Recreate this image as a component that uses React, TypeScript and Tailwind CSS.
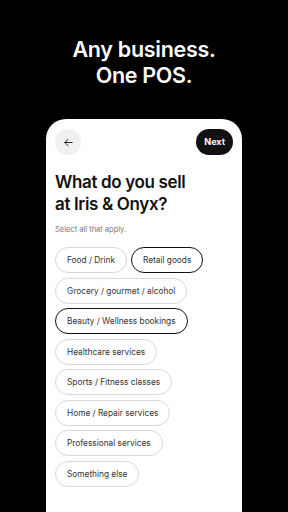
import React from 'react';

const options: { label: string; selected?: boolean }[] = [
  { label: 'Food / Drink' },
  { label: 'Retail goods', selected: true },
  { label: 'Grocery / gourmet / alcohol' },
  { label: 'Beauty / Wellness bookings', selected: true },
  { label: 'Healthcare services' },
  { label: 'Sports / Fitness classes' },
  { label: 'Home / Repair services' },
  { label: 'Professional services' },
  { label: 'Something else' },
];

const App: React.FC = () => {
  return (
    <div
      className="w-[288px] h-[512px] bg-black overflow-hidden flex flex-col items-center"
      style={{ fontFamily: 'Inter, "Liberation Sans", sans-serif' }}
    >
      {/* Headline */}
      <h1 className="mt-[36px] text-white text-[21.5px] leading-[26px] font-semibold text-center tracking-[-0.3px]">
        Any business.
        <br />
        One POS.
      </h1>

      {/* Phone card */}
      <div className="mt-[31px] w-[196px] flex-1 bg-white rounded-t-[20px] px-[9px] pt-[10px]">
        <div className="flex items-center justify-between">
          <button className="w-[26px] h-[26px] rounded-full bg-[#f0f0f0] flex items-center justify-center">
            <svg width="11" height="11" viewBox="0 0 24 24" fill="none" stroke="#111" strokeWidth="2" strokeLinecap="round" strokeLinejoin="round">
              <path d="M20 12H4" />
              <path d="M11 5l-7 7 7 7" />
            </svg>
          </button>
          <button className="h-[26px] px-[8px] rounded-full bg-[#111] text-white text-[9px] font-bold">
            Next
          </button>
        </div>

        <h2 className="mt-[16px] text-[17px] leading-[22px] font-semibold text-[#111] tracking-[-0.35px]">
          What do you sell
          <br />
          at Iris &amp; Onyx?
        </h2>

        <p className="mt-[9px] text-[7.5px] text-[#767676]">Select all that apply.</p>

        <div className="mt-[12px] flex flex-wrap gap-x-[4px] gap-y-[4.5px]">
          {options.map((o) => (
            <div
              key={o.label}
              className={`h-[26px] px-[11px] rounded-full flex items-center text-[8.3px] text-[#333] ${
                o.selected ? 'border-[1.5px] border-[#111]' : 'border border-[#d8d8d8]'
              }`}
            >
              {o.label}
            </div>
          ))}
        </div>
      </div>
    </div>
  );
};

export default App;
